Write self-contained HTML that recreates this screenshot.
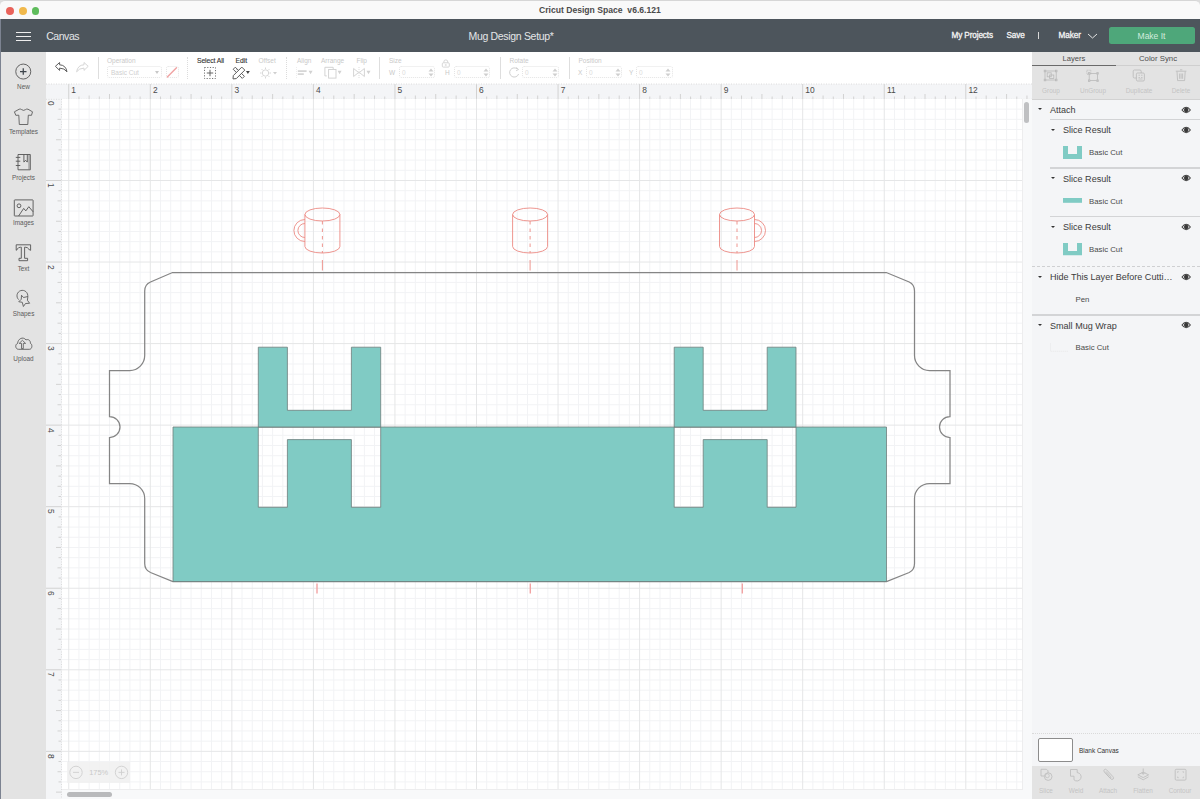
<!DOCTYPE html>
<html><head><meta charset="utf-8">
<style>
*{box-sizing:border-box;margin:0;padding:0}
html,body{width:1200px;height:799px;overflow:hidden;background:#dcdcdc}
body{position:relative;font-family:"Liberation Sans",sans-serif;color:#4a4a4a}
.a{position:absolute}
.t{position:absolute;white-space:nowrap;line-height:1}
#titlebar{left:0;top:0;width:1200px;height:19px;background:#f9f9f9;border-top:1px solid #d6d6d6;border-radius:5px 5px 0 0}
.dot{position:absolute;width:8px;height:8px;border-radius:50%;top:5.2px}
#header{left:1px;top:19px;width:1199px;height:32.5px;background:#4d555c}
#sidebar{left:1px;top:51px;width:45px;height:748px}
#toolbar{left:46px;top:51.5px;width:986px;height:32.5px;background:#fff}
#ruler-top{left:46px;top:84px;width:986px;height:15px;background:#f4f5f7}
#ruler-left{left:46px;top:99px;width:15.5px;height:700px;background:#f4f5f7}
#panel{left:1032px;top:51.5px;width:168px;height:747.5px;background:#f4f5f7}
.side-lbl{position:absolute;width:45px;text-align:center;font-size:6.4px;color:#5b5b5b;left:0}
.tb-lbl{position:absolute;font-size:6.5px;color:#c9c9c9;white-space:nowrap;line-height:1}
.tb-lbl.d{color:#4a4a4a}
.inp{position:absolute;height:11.8px;border:1px dotted #e4e4e4;border-radius:2.5px}
.sep{position:absolute;width:1px;background:#dedede;top:57px;height:22px}
.lay{position:absolute;font-size:9.05px;color:#3c3c3c;white-space:nowrap;line-height:1}
.sub{position:absolute;font-size:7.8px;color:#4a4a4a;white-space:nowrap;line-height:1}
.caret{position:absolute;width:0;height:0;border-left:2.4px solid transparent;border-right:2.4px solid transparent;border-top:2.8px solid #333}
.rn{font-size:8.4px;color:#4a4a4a}
.pt-lbl{position:absolute;font-size:6.4px;color:#c4c4c4;white-space:nowrap;line-height:1}
</style></head>
<body>
<!-- window left border -->
<div class="a" style="left:0;top:19px;width:1.2px;height:780px;background:#7c8391"></div>

<!-- title bar -->
<div id="titlebar" class="a">
  <div class="dot" style="left:5.8px;top:6.2px;width:7.8px;height:7.8px;background:#e9625a"></div>
  <div class="dot" style="left:18.8px;top:6.2px;width:7.8px;height:7.8px;background:#f1b94c"></div>
  <div class="dot" style="left:31.6px;top:6.2px;width:7.8px;height:7.8px;background:#5ebc5b"></div>
  <div class="t" style="left:539px;top:4.7px;font-size:8.6px;font-weight:bold;color:#4b4b4b">Cricut Design Space&nbsp; v6.6.121</div>
</div>

<!-- header -->
<div id="header" class="a">
  <div class="a" style="left:15px;top:12.5px;width:15px;height:1.4px;background:#eee"></div>
  <div class="a" style="left:15px;top:16.8px;width:15px;height:1.4px;background:#eee"></div>
  <div class="a" style="left:15px;top:20.8px;width:15px;height:1.4px;background:#eee"></div>
  <div class="t" style="left:45.2px;top:11.7px;font-size:10.5px;letter-spacing:-0.45px;color:#e4e6e8">Canvas</div>
  <div class="t" style="left:467.5px;top:11.9px;font-size:10.5px;letter-spacing:-0.32px;color:#e4e6e8">Mug Design Setup*</div>
  <div class="t" style="left:950.5px;top:13px;font-size:8.2px;letter-spacing:-0.12px;color:#f4f4f4;-webkit-text-stroke:0.3px #f4f4f4">My Projects</div>
  <div class="t" style="left:1005.5px;top:13px;font-size:8.2px;letter-spacing:-0.12px;color:#f4f4f4;-webkit-text-stroke:0.3px #f4f4f4">Save</div>
  <div class="a" style="left:1036.8px;top:13.3px;width:1px;height:7px;background:#d8d8d8"></div>
  <div class="t" style="left:1057.5px;top:13px;font-size:8.2px;letter-spacing:-0.05px;color:#f4f4f4;-webkit-text-stroke:0.3px #f4f4f4">Maker</div>
  <svg class="a" style="left:1086px;top:13px" width="11" height="8"><path d="M1 2 L5.5 6 L10 2" stroke="#e4e4e4" stroke-width="1" fill="none"/></svg>
  <div class="a" style="left:1107.5px;top:7.7px;width:86px;height:17px;background:#4ea77a;border-radius:2.5px"></div>
  <div class="t" style="left:1107.5px;top:12.6px;width:86px;text-align:center;font-size:8.5px;color:#d3ecdf">Make It</div>
</div>

<!-- sidebar -->
<div class="a" style="left:1px;top:51.5px;width:45px;height:747.5px;background:#e3e3e3"></div>
<div id="sidebar" class="a">
  <!-- New -->
  <svg class="a" style="left:13px;top:11px" width="20" height="20"><circle cx="9.26" cy="9.56" r="7.5" fill="none" stroke="#555" stroke-width="0.9"/><path d="M9.26 6.3V12.8M6 9.56H12.5" stroke="#3d444b" stroke-width="1.25"/></svg>
  <div class="side-lbl" style="top:32px">New</div>
  <!-- Templates -->
  <svg class="a" style="left:12px;top:56px" width="22" height="20"><path d="M6.2 2.2Q8 1.8 8.6 2.6Q10.5 4.2 12.6 2.6Q13.3 1.8 15 2.2L19.5 4.8L18.5 8.3L15.3 8.2L14.8 17.5H6.3L5.8 8.2L2.8 8.3L1.4 4.8Z" fill="none" stroke="#555" stroke-width="0.85" stroke-linejoin="round"/></svg>
  <div class="side-lbl" style="top:77.4px">Templates</div>
  <!-- Projects -->
  <svg class="a" style="left:12px;top:100.8px" width="20" height="20"><path d="M5 2.5H17.3V17.8H5Z" fill="none" stroke="#555" stroke-width="0.9"/><path d="M16 2.9V17.4" stroke="#666" stroke-width="0.7"/><path d="M2.8 5.4H7.3M2.8 9.2H7.3M2.8 13.5H7.3" stroke="#555" stroke-width="0.9"/><path d="M10.9 2.6V10.1L12.6 8.3L14.3 10.1V2.6" fill="none" stroke="#555" stroke-width="0.9"/></svg>
  <div class="side-lbl" style="top:122.7px">Projects</div>
  <!-- Images -->
  <svg class="a" style="left:10.8px;top:146.5px" width="22" height="20"><rect x="2.3" y="1.9" width="18.8" height="16.1" fill="none" stroke="#555" stroke-width="0.9" rx="0.5"/><circle cx="7" cy="7.8" r="1.9" fill="none" stroke="#555" stroke-width="0.9"/><path d="M6.6 18L11.7 10.4L13.8 12.9L16.8 8.7L21.1 13.8" fill="none" stroke="#555" stroke-width="0.9"/></svg>
  <div class="side-lbl" style="top:168.4px">Images</div>
  <!-- Text -->
  <svg class="a" style="left:13px;top:192px" width="20" height="20"><path d="M2.2 1.8H16.6V7.3Q15.6 7.5 14.8 6Q13.6 4.2 11.2 4.2H10.6V15.3H13.6V17.7H5V15.3H7.3V4.2H6.7Q4.3 4.2 3.3 6Q2.8 7.5 2.2 7.3Z" fill="none" stroke="#555" stroke-width="0.9" stroke-linejoin="round"/></svg>
  <div class="side-lbl" style="top:213.5px">Text</div>
  <!-- Shapes -->
  <svg class="a" style="left:13px;top:238.2px" width="18" height="20"><path d="M4.6 10.6A5.4 5.4 0 1 1 13.7 7.7" fill="none" stroke="#555" stroke-width="0.85"/><path d="M7.5 6.25L9.5 8.5L13.9 7.5L13.4 11.25L15.6 14.25L11.5 14.5L9.4 17.5L8.25 13.25L4.75 12.75L7.25 10.25Z" fill="#e3e3e3" stroke="#555" stroke-width="0.85" stroke-linejoin="round"/></svg>
  <div class="side-lbl" style="top:258.7px">Shapes</div>
  <!-- Upload -->
  <svg class="a" style="left:13px;top:284px" width="20" height="16"><path d="M4.6 14.3C1.2 14.3 0.8 9.2 3.6 8.5C3.9 3.6 9 1.2 12 4.9C14.3 3.9 16.6 5.4 16.4 8.3C18.6 9.1 18.4 14.3 15.4 14.3Z" fill="none" stroke="#555" stroke-width="0.85" stroke-linejoin="round"/><path d="M8.4 5.3L5.2 8.4H7.5V13.6H9.3V8.4H11.6Z" fill="none" stroke="#555" stroke-width="0.8" stroke-linejoin="round"/></svg>
  <div class="side-lbl" style="top:303.9px">Upload</div>
</div>

<!-- toolbar -->
<div id="toolbar" class="a"></div>
<!-- toolbar contents (absolute page coords) -->
<svg class="a" style="left:50px;top:55px" width="45" height="22">
  <path d="M5.4 11.3L9.6 7.5V9.8Q15.8 10 17 16.8Q14.5 13.2 9.6 13.1V15.4Z" fill="none" stroke="#5c5c5c" stroke-width="1" stroke-linejoin="round"/>
  <path d="M38.2 11.3L34 7.5V9.8Q27.8 10 26.6 16.8Q29.1 13.2 34 13.1V15.4Z" fill="none" stroke="#d6d6d6" stroke-width="1" stroke-linejoin="round"/>
</svg>
<div class="sep" style="left:97.5px"></div>
<div class="tb-lbl" style="left:107px;top:58px">Operation</div>
<div class="inp" style="left:107px;top:66px;width:54.5px;height:12.3px"></div>
<div class="tb-lbl" style="left:111px;top:69.5px;color:#cfcfcf">Basic Cut</div>
<div class="caret" style="left:154.5px;top:71.4px;border-top-color:#c8c8c8;border-left-width:2.5px;border-right-width:2.5px;border-top-width:3.5px"></div>
<div class="inp" style="left:166px;top:66px;width:12.5px;height:12.3px"></div>
<svg class="a" style="left:166px;top:66px" width="13" height="13"><path d="M1.3 11L10.5 1.8" stroke="#f0a3a3" stroke-width="1.4" stroke-linecap="round"/></svg>
<div class="sep" style="left:187px;background:none;border-left:1px dotted #dcdcdc"></div>
<div class="tb-lbl d" style="left:197px;top:58px;font-size:6.8px;letter-spacing:-0.1px;color:#333;-webkit-text-stroke:0.12px #333">Select All</div>
<svg class="a" style="left:203px;top:66px" width="14" height="14"><rect x="1.5" y="1.5" width="11" height="11" fill="none" stroke="#666" stroke-width="0.9" stroke-dasharray="1.2 1.5"/><path d="M7 3.8V10.2M3.8 7H10.2" stroke="#555" stroke-width="0.9"/></svg>
<div class="tb-lbl d" style="left:235.5px;top:58px;font-size:6.8px;letter-spacing:-0.05px;color:#333;-webkit-text-stroke:0.12px #333">Edit</div>
<svg class="a" style="left:232px;top:66px" width="20" height="14"><path d="M1.2 3.3L3.3 1.2L12.4 10.3L10.3 12.4Z" fill="#fff" stroke="#555" stroke-width="0.95"/><path d="M4.2 4.2L5.2 3.2M6.3 6.3L7.3 5.3M8.4 8.4L9.4 7.4" stroke="#666" stroke-width="0.6"/><path d="M9.8 1.1L12.8 4.1L4.3 12.6L1 12.9L1.3 9.6Z" fill="#fff" stroke="#555" stroke-width="0.95" stroke-linejoin="round"/><path d="M14 4.9H17.8L15.9 7.9Z" fill="#444"/></svg>
<div class="tb-lbl" style="left:258.5px;top:58px">Offset</div>
<svg class="a" style="left:259px;top:66px" width="20" height="14"><circle cx="6.5" cy="7" r="3.2" fill="none" stroke="#d3d3d3" stroke-width="0.9"/><path d="M6.5 1.5V3M6.5 11V12.5M1 7H2.5M10.5 7H12M2.6 3.1L3.7 4.2M9.3 9.8L10.4 10.9M2.6 10.9L3.7 9.8M9.3 4.2L10.4 3.1" stroke="#d3d3d3" stroke-width="0.9"/><path d="M14 6H18L16 8.5Z" fill="#cfcfcf"/></svg>
<div class="sep" style="left:285.5px;background:none;border-left:1px dotted #dcdcdc"></div>
<div class="tb-lbl" style="left:297px;top:58px">Align</div>

<div class="tb-lbl" style="left:321px;top:58px">Arrange</div>

<div class="tb-lbl" style="left:356.5px;top:58px">Flip</div>

<svg class="a" style="left:290px;top:62px" width="90" height="20">
  <g fill="#d2d2d2" stroke="none">
    <path d="M6.5 5.2V16" stroke="#dcdcdc" stroke-width="0.6" stroke-dasharray="0.8 1.2"/>
    <rect x="7.8" y="8.3" width="8.8" height="1.6"/><rect x="7.8" y="11.3" width="6" height="1.6"/>
    <path d="M18.6 8.8H22.6L20.6 12.2Z"/>
    <path d="M47.6 8.8H51.6L49.6 12.2Z"/>
    <path d="M76.5 8.8H80.5L78.5 12.2Z"/>
  </g>
  <g fill="none" stroke="#cfcfcf" stroke-width="0.9">
    <path d="M36.8 13.9H34.9V5.3H43.2V7.2"/>
    <rect x="38.6" y="7.5" width="7.4" height="8.6" fill="#fff"/>
    <path d="M63.6 6.5V14.5L68.6 10.5ZM74.4 6.5V14.5L69.4 10.5Z"/>
    <path d="M69 5V16" stroke-dasharray="1 1" stroke-width="0.7"/>
  </g>
</svg>
<div class="sep" style="left:379px"></div>
<div class="tb-lbl" style="left:389px;top:58px">Size</div>
<div class="tb-lbl" style="left:389px;top:69.5px">W</div>
<div class="inp" style="left:399px;top:66.3px;width:36px"></div>
<div class="tb-lbl" style="left:402px;top:69.5px;color:#dcdcdc">0</div>
<svg class="a" style="left:428px;top:67px" width="6" height="11"><path d="M0.5 4.5L3 1.5L5.5 4.5ZM0.5 6.5L3 9.5L5.5 6.5Z" fill="#cfcfcf"/></svg>
<svg class="a" style="left:441px;top:58.5px" width="10" height="9"><path d="M2.8 3.8V3Q2.8 0.9 4.8 0.9Q6.8 0.9 6.8 3V3.8" fill="none" stroke="#d3d3d3" stroke-width="0.9"/><rect x="1.3" y="3.8" width="7" height="4.3" rx="1" fill="none" stroke="#d3d3d3" stroke-width="0.9"/><path d="M4.8 5V7M3.8 6H5.8" stroke="#d9d9d9" stroke-width="0.7"/></svg>
<div class="tb-lbl" style="left:445px;top:69.5px">H</div>
<div class="inp" style="left:454px;top:66.3px;width:36px"></div>
<div class="tb-lbl" style="left:457px;top:69.5px;color:#dcdcdc">0</div>
<svg class="a" style="left:483px;top:67px" width="6" height="11"><path d="M0.5 4.5L3 1.5L5.5 4.5ZM0.5 6.5L3 9.5L5.5 6.5Z" fill="#cfcfcf"/></svg>
<div class="sep" style="left:499.5px"></div>
<div class="tb-lbl" style="left:509.5px;top:58px">Rotate</div>
<svg class="a" style="left:508px;top:66px" width="13" height="13"><path d="M9.5 3.2A4.6 4.6 0 1 0 10.6 8" fill="none" stroke="#d0d0d0" stroke-width="1"/><path d="M8.3 1.3L10.6 3.5L8 4.8" fill="none" stroke="#d0d0d0" stroke-width="0.9"/></svg>
<div class="inp" style="left:522px;top:66.3px;width:36.5px"></div>
<div class="tb-lbl" style="left:525px;top:69.5px;color:#dcdcdc">0</div>
<svg class="a" style="left:551.5px;top:67px" width="6" height="11"><path d="M0.5 4.5L3 1.5L5.5 4.5ZM0.5 6.5L3 9.5L5.5 6.5Z" fill="#cfcfcf"/></svg>
<div class="sep" style="left:568.5px"></div>
<div class="tb-lbl" style="left:578.5px;top:58px">Position</div>
<div class="tb-lbl" style="left:578px;top:69.5px">X</div>
<div class="inp" style="left:586px;top:66.3px;width:36px"></div>
<div class="tb-lbl" style="left:589px;top:69.5px;color:#dcdcdc">0</div>
<svg class="a" style="left:615px;top:67px" width="6" height="11"><path d="M0.5 4.5L3 1.5L5.5 4.5ZM0.5 6.5L3 9.5L5.5 6.5Z" fill="#cfcfcf"/></svg>
<div class="tb-lbl" style="left:629px;top:69.5px">Y</div>
<div class="inp" style="left:636px;top:66.3px;width:36.5px"></div>
<div class="tb-lbl" style="left:639px;top:69.5px;color:#dcdcdc">0</div>
<svg class="a" style="left:665px;top:67px" width="6" height="11"><path d="M0.5 4.5L3 1.5L5.5 4.5ZM0.5 6.5L3 9.5L5.5 6.5Z" fill="#cfcfcf"/></svg>


<!-- rulers -->
<div id="ruler-top" class="a"></div>
<div id="ruler-left" class="a"></div>
<svg class="a" style="left:0;top:0" width="1032" height="799"><path d="M68.75 84V99M78.94 96.5V99M89.14 95.5V99M99.33 96.5V99M109.52 94V99M119.72 96.5V99M129.91 95.5V99M140.11 96.5V99M150.3 84V99M160.49 96.5V99M170.69 95.5V99M180.88 96.5V99M191.07 94V99M201.27 96.5V99M211.46 95.5V99M221.66 96.5V99M231.85 84V99M242.04 96.5V99M252.24 95.5V99M262.43 96.5V99M272.62 94V99M282.82 96.5V99M293.01 95.5V99M303.21 96.5V99M313.4 84V99M323.59 96.5V99M333.79 95.5V99M343.98 96.5V99M354.17 94V99M364.37 96.5V99M374.56 95.5V99M384.76 96.5V99M394.95 84V99M405.14 96.5V99M415.34 95.5V99M425.53 96.5V99M435.72 94V99M445.92 96.5V99M456.11 95.5V99M466.31 96.5V99M476.5 84V99M486.69 96.5V99M496.89 95.5V99M507.08 96.5V99M517.27 94V99M527.47 96.5V99M537.66 95.5V99M547.86 96.5V99M558.05 84V99M568.24 96.5V99M578.44 95.5V99M588.63 96.5V99M598.83 94V99M609.02 96.5V99M619.21 95.5V99M629.41 96.5V99M639.6 84V99M649.79 96.5V99M659.99 95.5V99M670.18 96.5V99M680.38 94V99M690.57 96.5V99M700.76 95.5V99M710.96 96.5V99M721.15 84V99M731.34 96.5V99M741.54 95.5V99M751.73 96.5V99M761.93 94V99M772.12 96.5V99M782.31 95.5V99M792.51 96.5V99M802.7 84V99M812.89 96.5V99M823.09 95.5V99M833.28 96.5V99M843.48 94V99M853.67 96.5V99M863.86 95.5V99M874.06 96.5V99M884.25 84V99M894.44 96.5V99M904.64 95.5V99M914.83 96.5V99M925.02 94V99M935.22 96.5V99M945.41 95.5V99M955.61 96.5V99M965.8 84V99M975.99 96.5V99M986.19 95.5V99M996.38 96.5V99M1006.58 94V99M1016.77 96.5V99M1026.96 95.5V99M58.5 109.13H61.5M57.5 119.33H61.5M58.5 129.52H61.5M56 139.72H61.5M58.5 149.91H61.5M57.5 160.1H61.5M58.5 170.3H61.5M46 180.49H61.5M58.5 190.68H61.5M57.5 200.88H61.5M58.5 211.07H61.5M56 221.26H61.5M58.5 231.46H61.5M57.5 241.65H61.5M58.5 251.85H61.5M46 262.04H61.5M58.5 272.23H61.5M57.5 282.43H61.5M58.5 292.62H61.5M56 302.81H61.5M58.5 313.01H61.5M57.5 323.2H61.5M58.5 333.4H61.5M46 343.59H61.5M58.5 353.78H61.5M57.5 363.98H61.5M58.5 374.17H61.5M56 384.37H61.5M58.5 394.56H61.5M57.5 404.75H61.5M58.5 414.95H61.5M46 425.14H61.5M58.5 435.33H61.5M57.5 445.53H61.5M58.5 455.72H61.5M56 465.91H61.5M58.5 476.11H61.5M57.5 486.3H61.5M58.5 496.5H61.5M46 506.69H61.5M58.5 516.88H61.5M57.5 527.08H61.5M58.5 537.27H61.5M56 547.46H61.5M58.5 557.66H61.5M57.5 567.85H61.5M58.5 578.05H61.5M46 588.24H61.5M58.5 598.43H61.5M57.5 608.63H61.5M58.5 618.82H61.5M56 629.01H61.5M58.5 639.21H61.5M57.5 649.4H61.5M58.5 659.6H61.5M46 669.79H61.5M58.5 679.98H61.5M57.5 690.18H61.5M58.5 700.37H61.5M56 710.57H61.5M58.5 720.76H61.5M57.5 730.95H61.5M58.5 741.15H61.5M46 751.34H61.5M58.5 761.53H61.5M57.5 771.73H61.5M58.5 781.92H61.5M56 792.12H61.5" stroke="#d2d2d2" stroke-width="1" fill="none"/><path d="M46 84H1032M61.5 99V799M46 99.3H1032" stroke="#dcdcdc" stroke-width="1" stroke-dasharray="1 1.5"/></svg><div class="t rn" style="left:71.3px;top:86.1px">1</div><div class="t rn" style="left:152.9px;top:86.1px">2</div><div class="t rn" style="left:234.4px;top:86.1px">3</div><div class="t rn" style="left:316.0px;top:86.1px">4</div><div class="t rn" style="left:397.6px;top:86.1px">5</div><div class="t rn" style="left:479.1px;top:86.1px">6</div><div class="t rn" style="left:560.7px;top:86.1px">7</div><div class="t rn" style="left:642.2px;top:86.1px">8</div><div class="t rn" style="left:723.8px;top:86.1px">9</div><div class="t rn" style="left:805.3px;top:86.1px">10</div><div class="t rn" style="left:886.9px;top:86.1px">11</div><div class="t rn" style="left:968.4px;top:86.1px">12</div><div class="t rn" style="left:49.2px;top:101.4px;transform:rotate(90deg);transform-origin:3px 3px">0</div><div class="t rn" style="left:49.2px;top:183.0px;transform:rotate(90deg);transform-origin:3px 3px">1</div><div class="t rn" style="left:49.2px;top:264.5px;transform:rotate(90deg);transform-origin:3px 3px">2</div><div class="t rn" style="left:49.2px;top:346.1px;transform:rotate(90deg);transform-origin:3px 3px">3</div><div class="t rn" style="left:49.2px;top:427.6px;transform:rotate(90deg);transform-origin:3px 3px">4</div><div class="t rn" style="left:49.2px;top:509.2px;transform:rotate(90deg);transform-origin:3px 3px">5</div><div class="t rn" style="left:49.2px;top:590.7px;transform:rotate(90deg);transform-origin:3px 3px">6</div><div class="t rn" style="left:49.2px;top:672.3px;transform:rotate(90deg);transform-origin:3px 3px">7</div><div class="t rn" style="left:49.2px;top:753.8px;transform:rotate(90deg);transform-origin:3px 3px">8</div>

<!-- canvas grid -->
<div class="a" style="left:61.5px;top:99px;width:961px;height:690px;background:#fff"></div>
<svg class="a" style="left:0;top:0" width="1200" height="799">
  <path d="M78.94 99V789M89.14 99V789M99.33 99V789M109.52 99V789M119.72 99V789M129.91 99V789M140.11 99V789M160.49 99V789M170.69 99V789M180.88 99V789M191.07 99V789M201.27 99V789M211.46 99V789M221.66 99V789M242.04 99V789M252.24 99V789M262.43 99V789M272.62 99V789M282.82 99V789M293.01 99V789M303.21 99V789M323.59 99V789M333.79 99V789M343.98 99V789M354.17 99V789M364.37 99V789M374.56 99V789M384.76 99V789M405.14 99V789M415.34 99V789M425.53 99V789M435.72 99V789M445.92 99V789M456.11 99V789M466.31 99V789M486.69 99V789M496.89 99V789M507.08 99V789M517.27 99V789M527.47 99V789M537.66 99V789M547.86 99V789M568.24 99V789M578.44 99V789M588.63 99V789M598.83 99V789M609.02 99V789M619.21 99V789M629.41 99V789M649.79 99V789M659.99 99V789M670.18 99V789M680.38 99V789M690.57 99V789M700.76 99V789M710.96 99V789M731.34 99V789M741.54 99V789M751.73 99V789M761.93 99V789M772.12 99V789M782.31 99V789M792.51 99V789M812.89 99V789M823.09 99V789M833.28 99V789M843.48 99V789M853.67 99V789M863.86 99V789M874.06 99V789M894.44 99V789M904.64 99V789M914.83 99V789M925.02 99V789M935.22 99V789M945.41 99V789M955.61 99V789M975.99 99V789M986.19 99V789M996.38 99V789M1006.58 99V789M1016.77 99V789M61 109.13H1022.5M61 119.33H1022.5M61 129.52H1022.5M61 139.72H1022.5M61 149.91H1022.5M61 160.1H1022.5M61 170.3H1022.5M61 190.68H1022.5M61 200.88H1022.5M61 211.07H1022.5M61 221.26H1022.5M61 231.46H1022.5M61 241.65H1022.5M61 251.85H1022.5M61 272.23H1022.5M61 282.43H1022.5M61 292.62H1022.5M61 302.81H1022.5M61 313.01H1022.5M61 323.2H1022.5M61 333.4H1022.5M61 353.78H1022.5M61 363.98H1022.5M61 374.17H1022.5M61 384.37H1022.5M61 394.56H1022.5M61 404.75H1022.5M61 414.95H1022.5M61 435.33H1022.5M61 445.53H1022.5M61 455.72H1022.5M61 465.91H1022.5M61 476.11H1022.5M61 486.3H1022.5M61 496.5H1022.5M61 516.88H1022.5M61 527.08H1022.5M61 537.27H1022.5M61 547.46H1022.5M61 557.66H1022.5M61 567.85H1022.5M61 578.05H1022.5M61 598.43H1022.5M61 608.63H1022.5M61 618.82H1022.5M61 629.01H1022.5M61 639.21H1022.5M61 649.4H1022.5M61 659.6H1022.5M61 679.98H1022.5M61 690.18H1022.5M61 700.37H1022.5M61 710.57H1022.5M61 720.76H1022.5M61 730.95H1022.5M61 741.15H1022.5M61 761.53H1022.5M61 771.73H1022.5M61 781.92H1022.5" stroke="#f2f3f5" stroke-width="1" fill="none"/>
  <path d="M68.75 99V789M150.3 99V789M231.85 99V789M313.4 99V789M394.95 99V789M476.5 99V789M558.05 99V789M639.6 99V789M721.15 99V789M802.7 99V789M884.25 99V789M965.8 99V789M61 180.49H1022.5M61 262.04H1022.5M61 343.59H1022.5M61 425.14H1022.5M61 506.69H1022.5M61 588.24H1022.5M61 669.79H1022.5M61 751.34H1022.5" stroke="#e5e6e7" stroke-width="1" fill="none"/>
</svg>


<!-- design -->
<svg class="a" style="left:0;top:0" width="1032" height="799">
  <path d="M172.5 272.5H886.3L909.2 282Q914.5 284.5 914.5 291V355.5A15 15 0 0 0 929.5 370.5H950V416.5A10.5 10.5 0 0 0 950 437.5V483.5H929.5A15 15 0 0 0 914.5 498.5V563.5Q914.5 570 909.2 572.5L886.5 581.5H172.9L150.5 572.5Q144.7 570 144.7 563.5V498.5A15 15 0 0 0 129.7 483.5H109.5V437.5A10.5 10.5 0 0 0 109.5 416.5V370.5H129.7A15 15 0 0 0 144.7 355.5V291Q144.7 284.5 150.5 282Z" fill="none" stroke="#858585" stroke-width="1.25"/>
  <g fill="#80cbc4" stroke="#6f7d7c" stroke-width="0.8">
    <path fill-rule="evenodd" d="M173 427H886.5V581.5H173ZM258.3 427V507.3H287.4V439.6H351.4V507.3H380.7V427ZM674.2 427V507.3H703.2V439.6H767.2V507.3H796V427Z"/>
    <path d="M258.3 347.2H287.4V410.3H351.4V347.2H380.7V427H258.3Z"/>
    <path d="M674.2 347.2H703.2V410.3H767.2V347.2H796V427H674.2Z"/>
  </g>
  <g fill="none" stroke="#ec8a83" stroke-width="0.9">
    <ellipse cx="322.4" cy="214.5" rx="17.5" ry="6.5"/><path d="M304.9 214.5V246.5A17.5 6.5 0 0 0 339.9 246.5V214.5"/><path d="M304.9 219.5A11 11 0 0 0 304.9 241.5M304.9 223.5A7 7 0 0 0 304.9 237.5"/><path d="M322.4 221V253" stroke-dasharray="3.5 4"/><path d="M322.4 260V270.5"/><ellipse cx="530.1" cy="214.5" rx="17.5" ry="6.5"/><path d="M512.6 214.5V246.5A17.5 6.5 0 0 0 547.6 246.5V214.5"/><path d="M530.1 221V253" stroke-dasharray="3.5 4"/><path d="M530.1 260V270.5"/><ellipse cx="737" cy="214.5" rx="17.5" ry="6.5"/><path d="M719.5 214.5V246.5A17.5 6.5 0 0 0 754.5 246.5V214.5"/><path d="M754.5 219.5A11 11 0 0 1 754.5 241.5M754.5 223.5A7 7 0 0 1 754.5 237.5"/><path d="M737 221V253" stroke-dasharray="3.5 4"/><path d="M737 260V270.5"/>
  </g>
  <g stroke="#f2a3a3" stroke-width="1.4">
    <path d="M317 583.5V593.5M530.3 583.5V593.5M742.3 583.5V593.5"/>
  </g>
</svg>

<!-- right panel -->
<div id="panel" class="a"></div>
<!-- tabs -->
<div class="a" style="left:1032px;top:51.5px;width:168px;height:48px;background:#e3e3e3"></div>
<div class="a" style="left:1032px;top:64.6px;width:84px;height:1.4px;background:#6a6a6a"></div>
<div class="a" style="left:1116px;top:65.3px;width:84px;height:0.8px;background:#cfcfcf"></div>
<div class="t" style="left:1032px;top:54.8px;width:84px;text-align:center;font-size:7.6px;color:#4e4e4e">Layers</div>
<div class="t" style="left:1116px;top:54.8px;width:84px;text-align:center;font-size:7.8px;color:#4e4e4e">Color Sync</div>
<!-- layer toolbar icons -->
<svg class="a" style="left:1032px;top:66px" width="168" height="20">
  <g fill="none" stroke="#b9b9b9" stroke-width="0.8">
    <rect x="13" y="5" width="11.2" height="9"/>
    <rect x="12.2" y="4.2" width="1.6" height="1.6" fill="#e3e3e3"/><rect x="23.4" y="4.2" width="1.6" height="1.6" fill="#e3e3e3"/><rect x="12.2" y="13.2" width="1.6" height="1.6" fill="#e3e3e3"/><rect x="23.4" y="13.2" width="1.6" height="1.6" fill="#e3e3e3"/>
    <rect x="15.2" y="6.8" width="4" height="4"/><rect x="17.6" y="9" width="4.2" height="3.5"/>
    <rect x="54.8" y="4.2" width="4" height="4" stroke-dasharray="1 0.8"/>
    <rect x="57.2" y="7.4" width="8.3" height="7.2"/>
    <rect x="56.4" y="6.6" width="1.5" height="1.5" fill="#e3e3e3"/><rect x="64.8" y="6.6" width="1.5" height="1.5" fill="#e3e3e3"/><rect x="56.4" y="13.9" width="1.5" height="1.5" fill="#e3e3e3"/><rect x="64.8" y="13.9" width="1.5" height="1.5" fill="#e3e3e3"/>
    <rect x="101.2" y="4" width="8" height="8" rx="1.2"/><rect x="104.4" y="7" width="8" height="8" rx="1.2" fill="#e3e3e3"/>
    <path d="M106.5 9.2h1.5M109 9.2h1.5M106.5 11.5h1.5M109 11.5h1.5M106.5 13h4" stroke-width="0.7"/>
    <path d="M143.8 5.2H154.4M148 3.8H150.3M145 5.5L145.6 14.6H152.6L153.2 5.5M147.6 7.5V12.8M149.1 7.5V12.8M150.6 7.5V12.8" stroke-width="0.8"/>
  </g>
</svg>
<div class="pt-lbl" style="left:1032px;top:88.3px;width:38px;text-align:center">Group</div>
<div class="pt-lbl" style="left:1072px;top:88.3px;width:42px;text-align:center">UnGroup</div>
<div class="pt-lbl" style="left:1118px;top:88.3px;width:42px;text-align:center">Duplicate</div>
<div class="pt-lbl" style="left:1163px;top:88.3px;width:36px;text-align:center">Delete</div>
<div class="a" style="left:1032px;top:99px;width:168px;height:1px;background:#d2d2d2"></div>
<!-- layers -->
<div class="caret" style="left:1038px;top:108.4px"></div>
<div class="lay" style="left:1050px;top:105.7px">Attach</div>
<svg class="a" style="left:1180.5px;top:105.7px" width="11" height="8"><path d="M0.4 4Q5.2 -2.6 10 4Q5.2 10.6 0.4 4Z" fill="#3a3a3a"/><path d="M1.6 4Q5.2 -0.6 8.8 4Q5.2 8.6 1.6 4Z" fill="#f4f5f7"/><circle cx="5.2" cy="4" r="2.3" fill="#3a3a3a"/></svg>
<div class="a" style="left:1050px;top:118.8px;width:150px;height:1.1px;background:#d2d3d5"></div>
<div class="caret" style="left:1051px;top:128.7px"></div>
<div class="lay" style="left:1063px;top:126px">Slice Result</div>
<svg class="a" style="left:1180.5px;top:125.7px" width="11" height="8"><path d="M0.4 4Q5.2 -2.6 10 4Q5.2 10.6 0.4 4Z" fill="#3a3a3a"/><path d="M1.6 4Q5.2 -0.6 8.8 4Q5.2 8.6 1.6 4Z" fill="#f4f5f7"/><circle cx="5.2" cy="4" r="2.3" fill="#3a3a3a"/></svg>
<svg class="a" style="left:1063px;top:145.5px" width="20" height="13"><path d="M0 0H5V8H14V0H19V13H0Z" fill="#80cbc4"/></svg>
<div class="sub" style="left:1089px;top:148.5px">Basic Cut</div>
<div class="a" style="left:1050px;top:167.3px;width:150px;height:1.4px;background:#d3d4d6"></div>
<div class="caret" style="left:1051px;top:177.2px"></div>
<div class="lay" style="left:1063px;top:174.5px">Slice Result</div>
<svg class="a" style="left:1180.5px;top:174.2px" width="11" height="8"><path d="M0.4 4Q5.2 -2.6 10 4Q5.2 10.6 0.4 4Z" fill="#3a3a3a"/><path d="M1.6 4Q5.2 -0.6 8.8 4Q5.2 8.6 1.6 4Z" fill="#f4f5f7"/><circle cx="5.2" cy="4" r="2.3" fill="#3a3a3a"/></svg>
<svg class="a" style="left:1063px;top:198px" width="20" height="5"><rect x="0" y="0" width="19" height="4.8" fill="#80cbc4"/></svg>
<div class="sub" style="left:1089px;top:197.5px">Basic Cut</div>
<div class="a" style="left:1050px;top:216px;width:150px;height:1.4px;background:#d3d4d6"></div>
<div class="caret" style="left:1051px;top:225.7px"></div>
<div class="lay" style="left:1063px;top:223px">Slice Result</div>
<svg class="a" style="left:1180.5px;top:222.5px" width="11" height="8"><path d="M0.4 4Q5.2 -2.6 10 4Q5.2 10.6 0.4 4Z" fill="#3a3a3a"/><path d="M1.6 4Q5.2 -0.6 8.8 4Q5.2 8.6 1.6 4Z" fill="#f4f5f7"/><circle cx="5.2" cy="4" r="2.3" fill="#3a3a3a"/></svg>
<svg class="a" style="left:1063px;top:243px" width="20" height="13"><path d="M0 0H5V8H14V0H19V12.3H0Z" fill="#80cbc4"/></svg>
<div class="sub" style="left:1089px;top:245.5px">Basic Cut</div>
<div class="a" style="left:1032px;top:265.6px;width:168px;height:1px;border-top:1px dashed #cfd0d2"></div>
<div class="caret" style="left:1038px;top:276px"></div>
<div class="lay" style="left:1050px;top:273.3px">Hide This Layer Before Cutti…</div>
<svg class="a" style="left:1180.5px;top:272.7px" width="11" height="8"><path d="M0.4 4Q5.2 -2.6 10 4Q5.2 10.6 0.4 4Z" fill="#3a3a3a"/><path d="M1.6 4Q5.2 -0.6 8.8 4Q5.2 8.6 1.6 4Z" fill="#f4f5f7"/><circle cx="5.2" cy="4" r="2.3" fill="#3a3a3a"/></svg>
<div class="sub" style="left:1075.5px;top:295.5px">Pen</div>
<div class="a" style="left:1032px;top:314.3px;width:168px;height:1.4px;background:#d3d4d6"></div>
<div class="caret" style="left:1038px;top:324.4px"></div>
<div class="lay" style="left:1050px;top:321.7px">Small Mug Wrap</div>
<svg class="a" style="left:1180.5px;top:321.2px" width="11" height="8"><path d="M0.4 4Q5.2 -2.6 10 4Q5.2 10.6 0.4 4Z" fill="#3a3a3a"/><path d="M1.6 4Q5.2 -0.6 8.8 4Q5.2 8.6 1.6 4Z" fill="#f4f5f7"/><circle cx="5.2" cy="4" r="2.3" fill="#3a3a3a"/></svg>
<svg class="a" style="left:1049.5px;top:343.3px" width="20" height="9"><path d="M0.5 0.5V8.3H18.5" fill="none" stroke="#e2e3e5" stroke-width="0.8" stroke-dasharray="1 1"/></svg>
<div class="sub" style="left:1075.5px;top:343.8px">Basic Cut</div>
<div class="a" style="left:1031px;top:99.5px;width:1px;height:700px;background:#e9eaeb"></div>
<!-- blank canvas -->
<div class="a" style="left:1032px;top:733px;width:168px;height:1px;border-top:1px dotted #dadada"></div>
<div class="a" style="left:1038px;top:738px;width:34.5px;height:23.5px;background:#fff;border:1.3px solid #8c8c8c;border-radius:2px"></div>
<div class="t" style="left:1079px;top:747.5px;font-size:6.45px;color:#333">Blank Canvas</div>
<!-- bottom tools -->
<div class="a" style="left:1032px;top:765.5px;width:168px;height:34px;background:#e3e3e3"></div>
<svg class="a" style="left:1032px;top:766px" width="168" height="16">
  <g fill="none" stroke="#bdbdbd" stroke-width="0.85">
    <path d="M9 3.3H14.5L16 4.8V6.8M9 3.3V10H12.2"/><circle cx="16.2" cy="10.6" r="3.8"/><circle cx="15.3" cy="9.7" r="2" stroke-width="0.7"/>
    <path d="M38.5 3.5H45.2V6.6A4.2 4.2 0 1 1 42 13.8V10.2H38.5Z"/>
    <path d="M73.2 6.5L78.6 12.6Q80 14.2 81.2 13Q82 11.8 80.8 10.5L74.6 3.8Q73.4 2.7 72.3 3.7Q71.3 4.8 72.4 6L77.5 11.6Q78.2 12.3 78.8 11.8Q79.3 11.2 78.6 10.5L74 5.4"/>
    <path d="M105.8 8.8L111.2 11.6L116.6 8.8M105.8 10.8L111.2 13.8L116.6 10.8M105.8 8.8L111.2 6.2L116.6 8.8"/>
    <path d="M111.2 2.5V8.3M109.5 6.6L111.2 8.3L112.9 6.6"/>
    <rect x="143.2" y="3.3" width="10.8" height="10.8" rx="1"/>
    <path d="M145.6 6.8V5.7H146.7M150.5 5.7H151.6V6.8M151.6 10.6V11.7H150.5M146.7 11.7H145.6V10.6" stroke-width="0.7"/>
  </g>
</svg>
<div class="pt-lbl" style="left:1032px;top:788.1px;width:28px;text-align:center">Slice</div>
<div class="pt-lbl" style="left:1062px;top:788.1px;width:28px;text-align:center">Weld</div>
<div class="pt-lbl" style="left:1094px;top:788.1px;width:28px;text-align:center">Attach</div>
<div class="pt-lbl" style="left:1129px;top:788.1px;width:28px;text-align:center">Flatten</div>
<div class="pt-lbl" style="left:1166px;top:788.1px;width:28px;text-align:center">Contour</div>
<!-- canvas scrollbar & zoom -->
<div class="a" style="left:1022px;top:99px;width:10px;height:700px;background:#f8f9fa;border-left:1px solid #ededee"></div>
<div class="a" style="left:61.5px;top:789px;width:961px;height:10px;background:#f8f9fa;border-top:1px solid #ededee"></div>
<div class="a" style="left:1024.2px;top:102px;width:4.9px;height:21px;background:#bfc0c2;border-radius:2.5px"></div>
<div class="a" style="left:66.7px;top:791.7px;width:45.5px;height:5.3px;background:#b9babc;border-radius:2.6px"></div>
<div class="a" style="left:67px;top:762px;width:62.5px;height:21px;background:#f0f0f0;opacity:0.85"></div>
<svg class="a" style="left:67px;top:762px" width="63" height="21"><g fill="none" stroke="#cfcfcf" stroke-width="0.9"><circle cx="9" cy="10.4" r="6.2"/><circle cx="54.5" cy="10.4" r="6.2"/><path d="M6 10.4H12M51.5 10.4H57.5M54.5 7.4V13.4"/></g></svg>
<div class="t" style="left:89.2px;top:768.5px;font-size:7.45px;color:#c9c9c9">175%</div>


</body></html>
